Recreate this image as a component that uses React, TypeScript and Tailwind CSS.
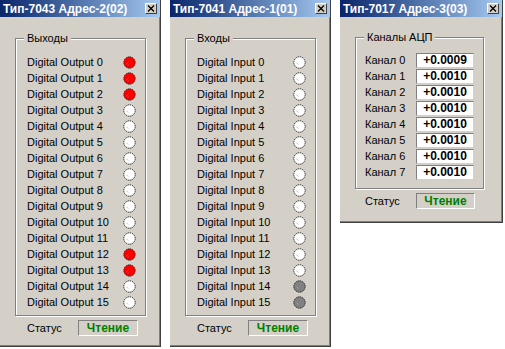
import React from 'react';

type LedState = 'on' | 'off' | 'dim';

function CloseButton() {
  return (
    <div className="w-[12px] h-[11px] bg-[#d4d0c8] border-t border-l border-white border-r border-b border-r-[#404040] border-b-[#404040] flex items-center justify-center">
      <svg width="8" height="7" viewBox="0 0 8 7">
        <path d="M1 0.5 L7 6.5 M7 0.5 L1 6.5" stroke="#000" strokeWidth="1.3" />
      </svg>
    </div>
  );
}

function Led({ state }: { state: LedState }) {
  const fill = state === 'on' ? '#ff0000' : state === 'dim' ? '#808080' : '#ffffff';
  return (
    <svg width="13" height="13" viewBox="0 0 13 13">
      <circle cx="6.5" cy="6.5" r="5.7" fill={fill} stroke="#202020" strokeWidth="1" strokeDasharray="1.3 0.9" />
      <path d="M3.6 6.8 L5.4 8.8" stroke={state === 'on' ? '#8080a0' : '#b0b0b0'} strokeWidth="0.9" opacity="0.8" />
    </svg>
  );
}

function Window({ title, className, children }: { title: string; className: string; children: React.ReactNode }) {
  return (
    <div className={`flex flex-col bg-[#d4d0c8] border-r border-b border-[#404040] shadow-[inset_-1px_-1px_0_#808080] ${className}`}>
      <div className="h-[17px] flex items-center justify-between pl-[3px] pr-[3px] bg-linear-to-r from-[#0a246a] to-[#a6caf0]">
        <span className="text-white font-bold text-[12px] leading-none">{title}</span>
        <CloseButton />
      </div>
      {children}
    </div>
  );
}

function GroupBox({ label, className, children }: { label: string; className: string; children: React.ReactNode }) {
  return (
    <div className={`relative border border-[#808080] shadow-[inset_1px_1px_0_#fff,1px_1px_0_#fff] ${className}`}>
      <span className="absolute -top-[8px] left-[8px] px-[3px] bg-[#d4d0c8] text-[11px] leading-[14px] text-black">{label}</span>
      {children}
    </div>
  );
}

function StatusBox({ className }: { className: string }) {
  return (
    <div className={`h-[16px] flex items-center justify-center border border-t-[#808080] border-l-[#808080] border-r-white border-b-white text-[12px] font-bold text-[#008000] ${className}`}>
      Чтение
    </div>
  );
}

const outputs: LedState[] = ['on', 'on', 'on', 'off', 'off', 'off', 'off', 'off', 'off', 'off', 'off', 'off', 'on', 'on', 'off', 'off'];
const inputs: LedState[] = ['off', 'off', 'off', 'off', 'off', 'off', 'off', 'off', 'off', 'off', 'off', 'off', 'off', 'off', 'dim', 'dim'];
const channels = ['+0.0009', '+0.0010', '+0.0010', '+0.0010', '+0.0010', '+0.0010', '+0.0010', '+0.0010'];

function DigitalWindow({ title, group, prefix, leds }: { title: string; group: string; prefix: string; leds: LedState[] }) {
  return (
    <Window title={title} className="w-[161px] h-[347px]">
      <div className="pl-[15px] pt-[21px]">
        <GroupBox label={group} className="w-[131px] pt-[15px] pb-[5px] pl-[11px] pr-[9px]">
          {leds.map((s, i) => (
            <div key={i} className="h-[16px] flex items-center justify-between">
              <span className="text-[11px] text-black">{prefix} {i}</span>
              <Led state={s} />
            </div>
          ))}
        </GroupBox>
        <div className="flex items-center mt-[4px] h-[16px]">
          <span className="w-[63px] pl-[12px] text-[11px] text-black">Статус</span>
          <StatusBox className="w-[60px]" />
        </div>
      </div>
    </Window>
  );
}

export default function App() {
  return (
    <div className="w-[505px] h-[349px] bg-white flex items-start gap-[9px] font-['Liberation_Sans',Arial,sans-serif]">
      <DigitalWindow title="Тип-7043 Адрес-2(02)" group="Выходы" prefix="Digital Output" leds={outputs} />
      <DigitalWindow title="Тип-7041 Адрес-1(01)" group="Входы" prefix="Digital Input" leds={inputs} />
      <Window title="Тип-7017 Адрес-3(03)" className="w-[163px] h-[223px]">
        <div className="pl-[15px] pt-[20px]">
          <GroupBox label="Каналы АЦП" className="w-[129px] pt-[14px] pb-[8px] pl-[9px] pr-[9px]">
            {channels.map((v, i) => (
              <div key={i} className="h-[16px] flex items-center">
                <span className="w-[52px] text-[11px] text-black">Канал {i}</span>
                <div className="w-[59px] h-[15px] bg-white flex items-center justify-center border border-t-[#808080] border-l-[#808080] border-r-[#d4d0c8] border-b-[#d4d0c8] text-[12px] font-bold text-black">
                  {v}
                </div>
              </div>
            ))}
          </GroupBox>
          <div className="flex items-center mt-[4px] h-[16px]">
            <span className="w-[61px] pl-[10px] text-[11px] text-black">Статус</span>
            <StatusBox className="w-[59px]" />
          </div>
        </div>
      </Window>
    </div>
  );
}
